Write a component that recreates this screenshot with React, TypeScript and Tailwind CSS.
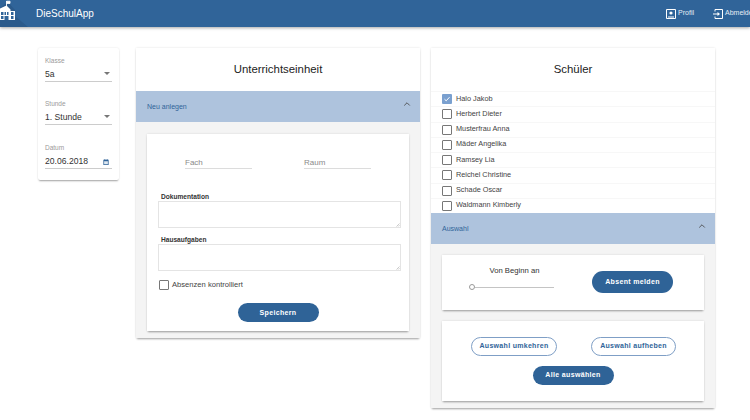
import { ChevronUp } from "lucide-react";

const students = [
  "Halo Jakob",
  "Herbert Dieter",
  "Musterfrau Anna",
  "Mäder Angelika",
  "Ramsey Lia",
  "Reichel Christine",
  "Schade Oscar",
  "Waldmann Kimberly",
];

const cardShadow = "shadow-[0_2px_2px_-1px_rgba(0,0,0,0.35),0_0_2px_rgba(0,0,0,0.12)]";

function Logo() {
  return (
    <svg width="28" height="27" viewBox="0 0 28 27" className="shrink-0">
      <path d="M8 2 L15 10 V16 L28 27 H0 V8 Z" fill="#2b5a8b" />
      <path d="M6.5 1 V6 M6.5 1.2 H10 V3.4 H6.5" stroke="#fff" strokeWidth="0.9" fill="#fff" />
      <path d="M6.5 5.5 L10.5 9.5 V11 H15 V20 H0 V8.5 Z" fill="#fff" />
      <path d="M1 12h2.5v3h-2.5z M4.5 12h1.5v3h-1.5z M7 12h1.5v3h-1.5z M11 12h2.5v3h-2.5z M1 16h2.5v3h-2.5z M4.5 16h4v4h-4z M11 16h2.5v3h-2.5z" fill="#306499" />
    </svg>
  );
}

function Field({ label, value, icon, mb }: { label: string; value: string; icon: "select" | "date"; mb: string }) {
  return (
    <div className={mb}>
      <div className="h-[10px] text-[6.5px] leading-[10px] text-[#9a9a9a]">{label}</div>
      <div className="flex h-[16px] items-center justify-between border-b border-b-[#cccccc] text-[8.6px] leading-[12px] text-[#333]">
        <span>{value}</span>
        {icon === "select" ? (
          <span className="mr-[2px] h-0 w-0 border-x-[3px] border-t-[3px] border-x-transparent border-t-[#777]" />
        ) : (
          <svg width="6" height="6" viewBox="0 0 8 8" className="mr-[3px] mt-[3px]">
            <path d="M0.5 1h7v7h-7z" fill="#306499" />
            <path d="M1.5 3h5v4h-5z" fill="#dfe8f1" />
            <path d="M2 0h1v1.5H2zM5 0h1v1.5H5z" fill="#306499" />
          </svg>
        )}
      </div>
    </div>
  );
}

function Accordion({ label }: { label: string }) {
  return (
    <div className="flex h-[31px] items-center justify-between bg-[#aec3dd] pl-[11px] pr-[8px] text-[7px] text-[#306499]">
      <span className="pt-[1px]">{label}</span>
      <ChevronUp size={10} strokeWidth={2} className="mb-[5px] text-[#444]" />
    </div>
  );
}

function Checkbox({ checked }: { checked?: boolean }) {
  if (checked) {
    return (
      <span className="flex h-[10px] w-[10px] items-center justify-center rounded-[1px] bg-[#7aa0cf]">
        <svg width="8" height="8" viewBox="0 0 8 8">
          <path d="M1.5 4.2 L3.2 5.8 L6.5 2.2" stroke="#fff" strokeWidth="1" fill="none" />
        </svg>
      </span>
    );
  }
  return <span className="h-[10px] w-[10px] rounded-[1px] border border-[#777] bg-white" />;
}

function TextBox() {
  return (
    <div className="relative h-[27px] w-[243px]">
      <textarea className="block h-full w-full resize-none border border-[#e4e4e4] bg-white" />
      <svg width="4" height="4" viewBox="0 0 4 4" className="absolute bottom-[1px] right-[1px]">
        <path d="M0.5 3.5 L3.5 0.5 M2.2 3.5 L3.5 2.2" stroke="#a8a8a8" strokeWidth="0.6" />
      </svg>
    </div>
  );
}

function FilledButton({ label, className }: { label: string; className: string }) {
  return (
    <button className={`rounded-full bg-[#2f6397] text-[7px] font-bold tracking-[0.35px] text-white ${className}`}>
      {label}
    </button>
  );
}

function OutlineButton({ label, className }: { label: string; className: string }) {
  return (
    <button className={`h-[19px] rounded-full border-[1.5px] border-[#7f9fc6] bg-white text-[7px] font-bold tracking-[0.3px] text-[#306499] ${className}`}>
      {label}
    </button>
  );
}

export default function App() {
  return (
    <div className="h-[420px] w-[750px] overflow-hidden bg-white font-['Liberation_Sans',sans-serif]">
      <header className="flex h-[27px] items-center bg-[#306499] shadow-[0_1px_3px_rgba(0,0,0,0.35)]">
        <Logo />
        <span className="ml-[8px] text-[10px] text-white">DieSchulApp</span>
        <div className="ml-auto flex items-center text-[7px] text-[#e6edf5]">
          <svg width="10" height="10" viewBox="0 0 10 10">
            <path d="M0.5 0.5h9v9h-9z" fill="none" stroke="#fff" />
            <circle cx="5" cy="4" r="1.6" fill="#fff" />
            <path d="M2 7.5h6v1H2z" fill="#fff" />
          </svg>
          <span className="ml-[2px]">Profil</span>
          <svg width="10" height="10" viewBox="0 0 10 10" className="ml-[19px]">
            <path d="M2 2.5V0.5h7.5v9H2V7.5" fill="none" stroke="#fff" />
            <path d="M0 4.5h4.5V3L7 5 4.5 7V5.5H0z" fill="#fff" />
          </svg>
          <span className="ml-[2px] w-[25px] whitespace-nowrap">Abmelden</span>
        </div>
      </header>

      <main className="flex items-start pl-[38px] pt-[21px]">
        <aside className={`h-[132px] w-[81px] shrink-0 rounded-[2px] bg-white px-[7px] pt-[8px] ${cardShadow}`}>
          <Field label="Klasse" value="5a" icon="select" mb="mb-[17px]" />
          <Field label="Stunde" value="1. Stunde" icon="select" mb="mb-[18px]" />
          <Field label="Datum" value="20.06.2018" icon="date" mb="" />
        </aside>

        <section className={`ml-[17px] h-[290px] w-[284px] shrink-0 bg-[#f4f4f4] ${cardShadow}`}>
          <h2 className="flex h-[43px] items-center justify-center bg-white text-[11.4px] text-[#222]">Unterrichtseinheit</h2>
          <Accordion label="Neu anlegen" />
          <div className="px-[11px] pt-[12px]">
            <div className={`h-[197px] bg-white px-[11px] ${cardShadow}`}>
              <div className="flex pl-[27px] pt-[22px]">
                <div className="h-[13px] w-[67px] border-b border-b-[#dcdcdc] text-[8px] leading-[13px] text-[#8a8a8a]">Fach</div>
                <div className="ml-[52px] h-[13px] w-[67px] border-b border-b-[#dcdcdc] text-[8px] leading-[13px] text-[#8a8a8a]">Raum</div>
              </div>
              <div className="pl-[3px] pt-[23px] text-[6.6px] font-bold leading-[9px] text-[#333]">Dokumentation</div>
              <TextBox />
              <div className="pl-[3px] pt-[7px] text-[6.6px] font-bold leading-[9px] text-[#333]">Hausaufgaben</div>
              <TextBox />
              <label className="mt-[8px] flex items-center pl-[1px] text-[7.6px] text-[#444]">
                <Checkbox />
                <span className="ml-[3px]">Absenzen kontrolliert</span>
              </label>
              <div className="flex justify-center pt-[13px]">
                <FilledButton label="Speichern" className="h-[19px] w-[81px]" />
              </div>
            </div>
          </div>
        </section>

        <section className={`ml-[11px] h-[360px] w-[284px] shrink-0 bg-[#f4f4f4] ${cardShadow}`}>
          <h2 className="flex h-[43px] items-center justify-center bg-white text-[11.4px] text-[#222]">Schüler</h2>
          <ul className="h-[122px] bg-white">
            {students.map((name, index) => (
              <li key={name} className="flex h-[15.25px] items-center border-t border-t-[#f7f7f7] pl-[11px] text-[7.3px] text-[#444]">
                <Checkbox checked={index === 0} />
                <span className="ml-[4px]">{name}</span>
              </li>
            ))}
          </ul>
          <Accordion label="Auswahl" />
          <div className="px-[11px] pt-[11px]">
            <div className={`flex h-[55px] bg-white pl-[27px] ${cardShadow}`}>
              <div className="w-[94px] pt-[11px]">
                <div className="pr-[3px] text-center text-[7.7px] leading-[10px] text-[#333]">Von Beginn an</div>
                <div className="mt-[8px] flex items-center">
                  <span className="h-[6px] w-[6px] rounded-full border border-[#999] bg-white" />
                  <span className="h-px w-[79px] bg-[#c4c4c4]" />
                </div>
              </div>
              <FilledButton label="Absent melden" className="ml-[29px] mt-[16px] h-[22px] w-[81px]" />
            </div>
            <div className={`mt-[11px] h-[80px] bg-white pt-[16px] ${cardShadow}`}>
              <div className="flex pl-[29px]">
                <OutlineButton label="Auswahl umkehren" className="w-[86px]" />
                <OutlineButton label="Auswahl aufheben" className="ml-[34px] w-[85px]" />
              </div>
              <div className="flex justify-center pt-[10px]">
                <FilledButton label="Alle auswählen" className="h-[19px] w-[81px]" />
              </div>
            </div>
          </div>
        </section>
      </main>
    </div>
  );
}
